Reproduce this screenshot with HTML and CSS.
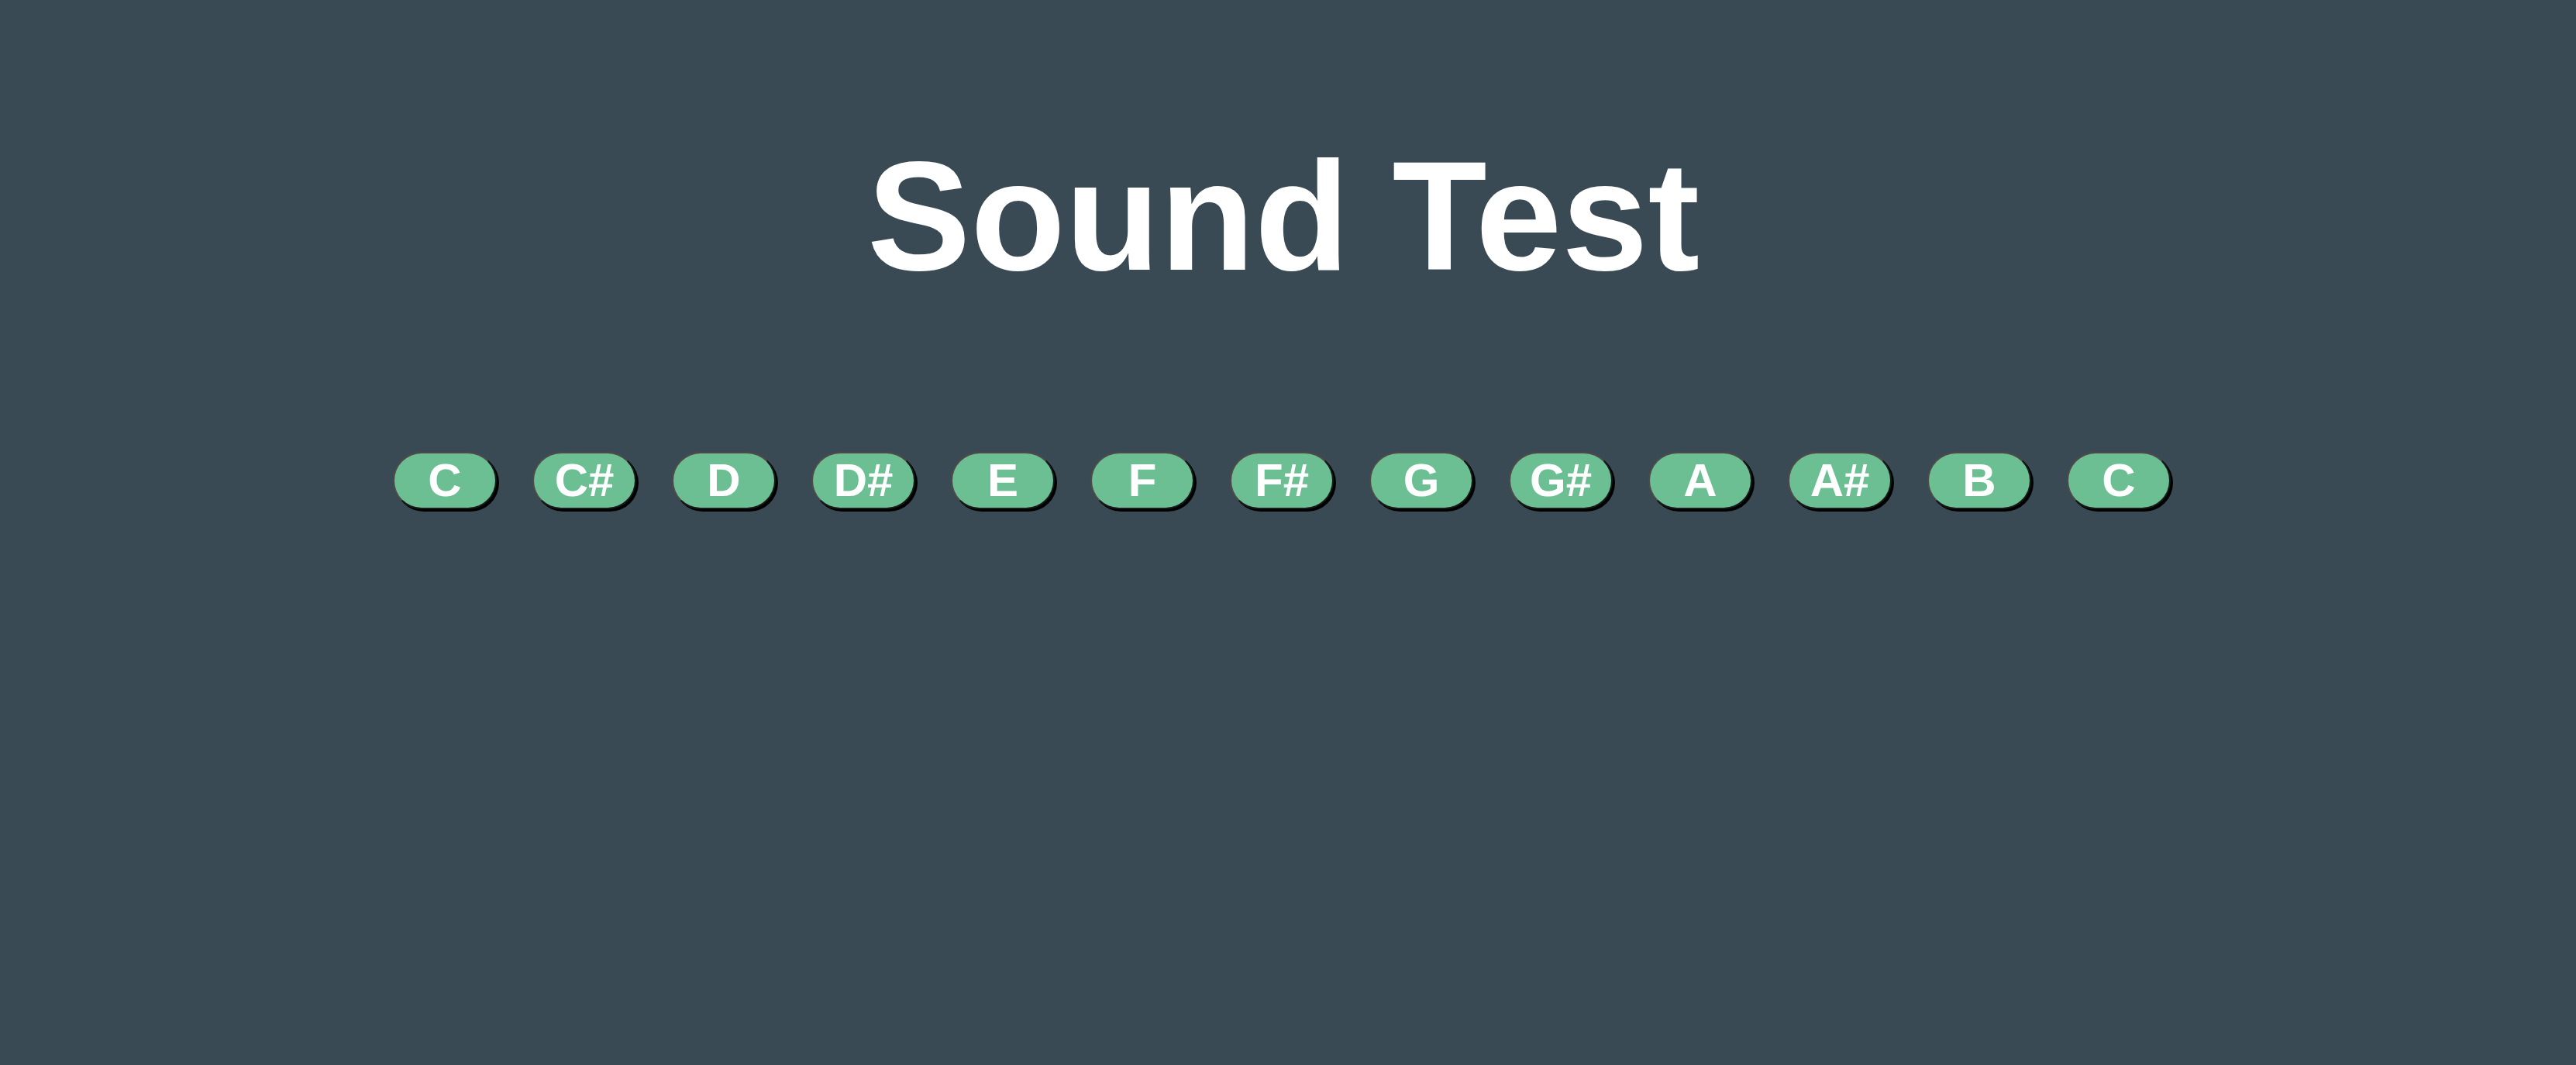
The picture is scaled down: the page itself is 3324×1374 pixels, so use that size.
FILE: index.html
```html
<!DOCTYPE html>
<html>
<head>
<meta charset="utf-8">
<title>Sound Test</title>
<link rel="stylesheet" href="styles.css">
</head>
<body>
<main class="page">
  <h1 class="title">Sound Test</h1>
  <div class="keys">
    <button class="key">C</button>
    <button class="key">C#</button>
    <button class="key">D</button>
    <button class="key">D#</button>
    <button class="key">E</button>
    <button class="key">F</button>
    <button class="key">F#</button>
    <button class="key">G</button>
    <button class="key">G#</button>
    <button class="key">A</button>
    <button class="key">A#</button>
    <button class="key">B</button>
    <button class="key">C</button>
  </div>
</main>
</body>
</html>
```
FILE: styles.css
```css
html, body {
  margin: 0;
  padding: 0;
  height: 100%;
}
body {
  background: #394a55;
  font-family: "Liberation Sans", Arial, Helvetica, sans-serif;
  color: #fff;
}
.page {
  display: flex;
  flex-direction: column;
  align-items: center;
  padding: 163px 12px 0 0;
}
.title {
  margin: 0;
  font-size: 200px;
  font-weight: 700;
  line-height: 232px;
  color: #fff;
}
.keys {
  display: flex;
  justify-content: center;
  gap: 46px;
  margin-top: 188px;
  padding-right: 4px;
}
.key {
  box-sizing: border-box;
  width: 134px;
  height: 74px;
  padding: 0;
  border-radius: 37px;
  border: 2px solid;
  border-color: #4f4a48 #1a1a1a #1a1a1a #4f4a48;
  box-shadow: 3px 3px 0 #000;
  background: #6bbf93;
  color: #fff;
  font-family: "Liberation Sans", Arial, Helvetica, sans-serif;
  font-weight: 700;
  font-size: 60px;
  line-height: 1;
  display: flex;
  align-items: center;
  justify-content: center;
}
```
